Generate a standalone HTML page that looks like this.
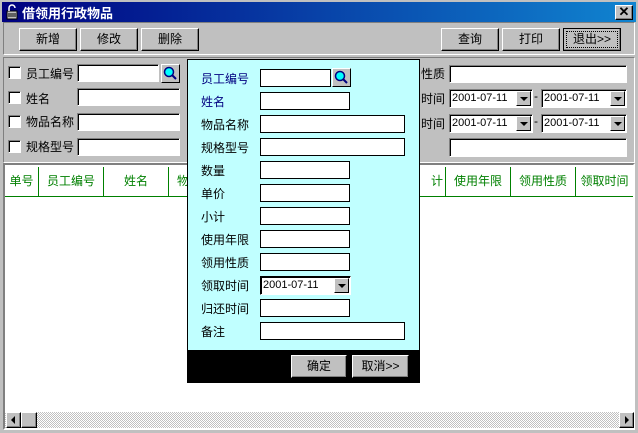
<!DOCTYPE html>
<html><head><meta charset="utf-8"><style>
*{box-sizing:border-box;margin:0;padding:0}
body{width:638px;height:433px;background:#c0c0c0;position:relative;overflow:hidden;font-family:"Liberation Sans","Noto Sans CJK SC","WenQuanYi Zen Hei",sans-serif;font-size:12px;color:#000}
.a{position:absolute}
.title{left:0;top:0;width:638px;height:22px;background:linear-gradient(to right,#000080,#1084d0);border:2px solid #c0c0c0;border-bottom:none}
.title span{position:absolute;left:20px;top:1px;color:#fff;font-weight:bold;font-size:13px}
.btn{position:absolute;background:#c0c0c0;border:1px solid;border-color:#fff #000 #000 #fff;box-shadow:inset -1px -1px #808080;text-align:center;line-height:20px;font-size:12px}
.inp{position:absolute;background:#fff;border:1px solid;border-color:#808080 #fff #fff #808080;box-shadow:inset 1px 1px #000}
.dinp{position:absolute;background:#fff;border:1px solid #000;height:18px}
.cb{position:absolute;width:13px;height:13px;background:#fff;border:1px solid;border-color:#808080 #fff #fff #808080;box-shadow:inset 1px 1px #000}
.lbl{position:absolute;font-size:12px}
.panel{position:absolute;border:1px solid;border-color:#808080 #fff #fff #808080}
.date{position:absolute;background:#fff;border:1px solid;border-color:#808080 #fff #fff #808080;box-shadow:inset 1px 1px #000;height:19px;font-family:"Liberation Sans",sans-serif;font-size:11px;line-height:17px;padding-left:2px;white-space:nowrap}
.arr{position:absolute;right:1px;top:1px;width:15px;height:15px;background:#c0c0c0;border:1px solid;border-color:#fff #000 #000 #fff}
.arr:after{content:"";position:absolute;left:3px;top:5px;border-left:4px solid transparent;border-right:4px solid transparent;border-top:4px solid #000}
.hd{position:absolute;top:167px;height:29px;line-height:29px;text-align:center;color:#008000;border-right:1px solid #008000}
.dl{position:absolute;left:201px;color:#000}
.srch{position:absolute;width:19px;height:19px;background:#c0c0c0;border:1px solid;border-color:#fff #000 #000 #fff}
</style></head><body>
<div class="a title"><span>借领用行政物品</span>
<svg class="a" style="left:3px;top:2px" width="14" height="16"><rect x="2" y="7" width="10" height="8" fill="#c0c0c0" stroke="#000"/><path d="M4 7V4a3 3 0 0 1 6 0" fill="none" stroke="#fff" stroke-width="1.5"/><line x1="3" y1="10" x2="11" y2="10" stroke="#000"/><line x1="3" y1="12" x2="11" y2="12" stroke="#000"/></svg>
<div class="btn" style="left:613px;top:3px;width:18px;height:15px;line-height:12px;font-weight:bold;font-size:13px">✕</div></div>
<div class="panel" style="left:3px;top:22px;width:632px;height:33px"></div>
<div class="btn" style="left:19px;top:28px;width:58px;height:23px">新增</div>
<div class="btn" style="left:80px;top:28px;width:58px;height:23px">修改</div>
<div class="btn" style="left:141px;top:28px;width:58px;height:23px">删除</div>
<div class="btn" style="left:441px;top:28px;width:58px;height:23px">查询</div>
<div class="btn" style="left:502px;top:28px;width:58px;height:23px">打印</div>
<div class="btn" style="left:563px;top:28px;width:58px;height:23px;border-color:#000;outline:1px dotted #000;outline-offset:-4px">退出&gt;&gt;</div>
<div class="panel" style="left:3px;top:57px;width:632px;height:106px"></div>
<div class="cb" style="left:8px;top:66px"></div><div class="lbl" style="left:26px;top:65px">员工编号</div>
<div class="cb" style="left:8px;top:91px"></div><div class="lbl" style="left:26px;top:90px">姓名</div>
<div class="cb" style="left:8px;top:115px"></div><div class="lbl" style="left:26px;top:113px">物品名称</div>
<div class="cb" style="left:8px;top:140px"></div><div class="lbl" style="left:26px;top:138px">规格型号</div>
<div class="inp" style="left:77px;top:64px;width:82px;height:18px"></div>
<div class="srch" style="left:161px;top:64px"><svg width="17" height="17"><circle cx="7" cy="7" r="4.5" fill="#0ff" stroke="#000080" stroke-width="1.5"/><line x1="10" y1="10" x2="14" y2="14" stroke="#000080" stroke-width="2"/></svg></div>
<div class="inp" style="left:77px;top:88px;width:103px;height:18px"></div>
<div class="inp" style="left:77px;top:113px;width:103px;height:18px"></div>
<div class="inp" style="left:77px;top:138px;width:103px;height:18px"></div>
<div class="lbl" style="left:421px;top:65px">性质</div>
<div class="inp" style="left:449px;top:65px;width:178px;height:18px"></div>
<div class="lbl" style="left:421px;top:90px">时间</div>
<div class="date" style="left:449px;top:89px;width:84px">2001-07-11<div class="arr"></div></div>
<div class="lbl" style="left:534px;top:89px">-</div>
<div class="date" style="left:541px;top:89px;width:86px">2001-07-11<div class="arr"></div></div>
<div class="lbl" style="left:421px;top:115px">时间</div>
<div class="date" style="left:449px;top:114px;width:84px">2001-07-11<div class="arr"></div></div>
<div class="lbl" style="left:534px;top:114px">-</div>
<div class="date" style="left:541px;top:114px;width:86px">2001-07-11<div class="arr"></div></div>
<div class="inp" style="left:449px;top:138px;width:178px;height:19px"></div>
<div class="a" style="left:3px;top:163px;width:632px;height:267px;border:2px solid;border-color:#808080 #fff #fff #808080;background:#fff"></div>
<div class="a" style="left:5px;top:196px;width:628px;height:1px;background:#008000"></div>
<div class="hd" style="left:5px;width:34px">单号</div>
<div class="hd" style="left:39px;width:65px">员工编号</div>
<div class="hd" style="left:104px;width:65px">姓名</div>
<div class="hd" style="left:169px;width:65px;text-align:left;padding-left:8px">物品名称</div>
<div class="hd" style="left:380px;width:66px;text-align:right;padding-right:2px">计</div>
<div class="hd" style="left:446px;width:65px">使用年限</div>
<div class="hd" style="left:511px;width:65px">领用性质</div>
<div class="hd" style="left:576px;width:57px;border:none">领取时间</div>
<div class="a" style="left:5px;top:412px;width:628px;height:16px;background:repeating-conic-gradient(#c0c0c0 0 25%,#fff 0 50%) 0 0/2px 2px"></div>
<div class="btn" style="left:6px;top:412px;width:15px;height:16px"><div class="a" style="left:4px;top:3px;border-top:4px solid transparent;border-bottom:4px solid transparent;border-right:4px solid #000"></div></div>
<div class="btn" style="left:21px;top:412px;width:16px;height:16px"></div>
<div class="btn" style="left:619px;top:412px;width:15px;height:16px"><div class="a" style="left:5px;top:3px;border-top:4px solid transparent;border-bottom:4px solid transparent;border-left:4px solid #000"></div></div>
<div class="a" style="left:187px;top:59px;width:233px;height:324px;background:#c0ffff;border:1px solid #000"></div>
<div class="a" style="left:187px;top:350px;width:233px;height:33px;background:#000"></div>
<div class="dl" style="top:70px;color:#000080">员工编号</div>
<div class="dl" style="top:93px;color:#000080">姓名</div>
<div class="dl" style="top:116px">物品名称</div>
<div class="dl" style="top:139px">规格型号</div>
<div class="dl" style="top:162px">数量</div>
<div class="dl" style="top:185px">单价</div>
<div class="dl" style="top:208px">小计</div>
<div class="dl" style="top:231px">使用年限</div>
<div class="dl" style="top:254px">领用性质</div>
<div class="dl" style="top:277px">领取时间</div>
<div class="dl" style="top:300px">归还时间</div>
<div class="dl" style="top:323px">备注</div>
<div class="dinp" style="left:260px;top:69px;width:71px"></div>
<div class="srch" style="left:332px;top:68px"><svg width="17" height="17"><circle cx="7" cy="7" r="4.5" fill="#0ff" stroke="#000080" stroke-width="1.5"/><line x1="10" y1="10" x2="14" y2="14" stroke="#000080" stroke-width="2"/></svg></div>
<div class="dinp" style="left:260px;top:92px;width:90px"></div>
<div class="dinp" style="left:260px;top:115px;width:145px"></div>
<div class="dinp" style="left:260px;top:138px;width:145px"></div>
<div class="dinp" style="left:260px;top:161px;width:90px"></div>
<div class="dinp" style="left:260px;top:184px;width:90px"></div>
<div class="dinp" style="left:260px;top:207px;width:90px"></div>
<div class="dinp" style="left:260px;top:230px;width:90px"></div>
<div class="dinp" style="left:260px;top:253px;width:90px"></div>
<div class="date" style="left:260px;top:276px;width:91px;border-color:#000 #fff #fff #000">2001-07-11<div class="arr"></div></div>
<div class="dinp" style="left:260px;top:299px;width:90px"></div>
<div class="dinp" style="left:260px;top:322px;width:145px"></div>
<div class="btn" style="left:291px;top:355px;width:56px;height:23px">确定</div>
<div class="btn" style="left:352px;top:355px;width:57px;height:23px">取消&gt;&gt;</div>
</body></html>
